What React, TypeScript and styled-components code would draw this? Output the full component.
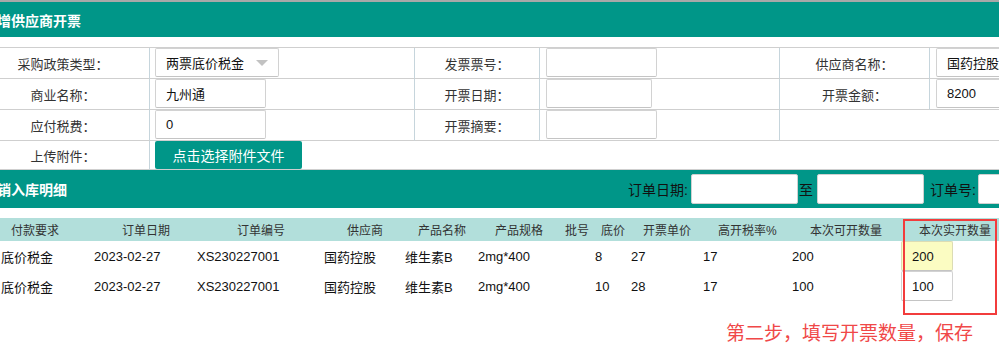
import React from "react";
import styled, { createGlobalStyle } from "styled-components";

const GlobalStyle = createGlobalStyle`
  html, body { margin: 0; padding: 0; background: #fff; }
  body {
    font-family: "Liberation Sans", "Noto Sans CJK SC", sans-serif;
    font-size: 13px;
    color: #333;
    overflow: hidden;
  }
  * { box-sizing: border-box; }
`;

const TEAL = "#009688";

const Page = styled.div`
  position: relative;
  width: 999px;
  height: 357px;
  overflow: hidden;
`;

const TopStrip = styled.div`
  height: 2px;
  background: #a8a8a8;
`;

const Band = styled.div<{ $h: number }>`
  height: ${(p) => p.$h}px;
  background: ${TEAL};
  display: flex;
  align-items: center;
  white-space: nowrap;
`;

const BandTitle = styled.div<{ $w?: number }>`
  flex: 0 0 ${(p) => (p.$w ? `${p.$w}px` : "auto")};
  margin-left: -3px;
  color: #fff;
  font-weight: bold;
  font-size: 14px;
  font-family: "Noto Sans CJK SC", "Liberation Sans", sans-serif;
`;

const Gap = styled.div<{ $h: number }>`
  height: ${(p) => p.$h}px;
`;

const FormGrid = styled.div`
  display: grid;
  grid-template-columns: 150px 265px 125px 240px 150px 1fr;
  border-top: 1px solid #cfcfcf;
`;

const Cell = styled.div<{ $span?: number; $h?: number; $last?: boolean }>`
  grid-column: span ${(p) => p.$span ?? 1};
  height: ${(p) => p.$h ?? 31}px;
  border-bottom: 1px solid #cfcfcf;
  border-right: ${(p) => (p.$last ? "none" : "1px solid #c6d5dc")};
  display: flex;
  align-items: center;
  white-space: nowrap;
  overflow: hidden;
`;

const LabelCell = styled(Cell)<{ $pr?: number }>`
  justify-content: center;
  padding-right: ${(p) => p.$pr ?? 0}px;
  color: #333;
`;

const FieldCell = styled(Cell)<{ $pl?: number }>`
  padding-left: ${(p) => p.$pl ?? 5}px;
  align-items: flex-start;
`;

const TextBox = styled.div<{ $w: number; $h?: number; $bg?: string; $border?: string }>`
  flex: 0 0 ${(p) => p.$w}px;
  width: ${(p) => p.$w}px;
  height: ${(p) => p.$h ?? 29}px;
  background: ${(p) => p.$bg ?? "#fff"};
  border: 1px solid ${(p) => p.$border ?? "#d2d2d2"};
  border-bottom-color: #c4c4c4;
  border-radius: 2px;
  display: flex;
  align-items: center;
  justify-content: space-between;
  padding: 0 10px;
  color: #111;
  font-size: 13px;
  white-space: nowrap;
  overflow: hidden;
`;

const Caret = styled.span`
  width: 0;
  height: 0;
  border-left: 6px solid transparent;
  border-right: 6px solid transparent;
  border-top: 6px solid #c2c2c2;
`;

const UploadButton = styled.button`
  height: 28px;
  width: 147px;
  border: none;
  border-radius: 2px;
  background: ${TEAL};
  color: #fff;
  font-size: 14px;
  font-family: "Noto Sans CJK SC", "Liberation Sans", sans-serif;
  padding: 0;
`;

const Filter = styled.div`
  display: flex;
  align-items: center;
  color: #111;
  font-size: 14px;
`;

const FilterLabel = styled.span<{ $ml?: number; $mr?: number }>`
  margin-left: ${(p) => p.$ml ?? 0}px;
  margin-right: ${(p) => p.$mr ?? 0}px;
`;

const FilterInput = styled.div`
  width: 107px;
  height: 30px;
  background: #fff;
  border: 1px solid #d0d0d0;
  border-radius: 2px;
  flex: 0 0 107px;
`;

const HeadRow = styled.div`
  display: grid;
  grid-template-columns: 111px 115px 110px 71px 77px 70px 36px 42px 75px 92px 109px 1fr;
  padding-left: 11px;
  height: 23px;
  align-items: center;
  background: #b2dfdb;
  color: #333;
  font-size: 12px;
  white-space: nowrap;
`;

const BodyRow = styled.div`
  display: grid;
  grid-template-columns: 93px 103px 127px 81px 73px 117px 36px 72px 89px 109px 1fr;
  padding-left: 1px;
  height: 30px;
  align-items: center;
  color: #111;
  white-space: nowrap;
`;

const Note = styled.div`
  margin-top: 19px;
  padding-left: 726px;
  font-size: 19px;
  line-height: 24px;
  color: #f04848;
  font-family: "Noto Sans CJK SC", "Liberation Sans", sans-serif;
  white-space: nowrap;
`;

const Highlight = styled.div`
  position: absolute;
  left: 903px;
  top: 219px;
  width: 94px;
  height: 96px;
  border: 2px solid #f23c3c;
  pointer-events: none;
`;

const headers = [
  "付款要求",
  "订单日期",
  "订单编号",
  "供应商",
  "产品名称",
  "产品规格",
  "批号",
  "底价",
  "开票单价",
  "高开税率%",
  "本次可开数量",
  "本次实开数量",
];

const rows = [
  { pay: "底价税金", date: "2023-02-27", no: "XS230227001", sup: "国药控股", name: "维生素B", spec: "2mg*400", base: "8", price: "27", rate: "17", avail: "200", qty: "200", hl: true },
  { pay: "底价税金", date: "2023-02-27", no: "XS230227001", sup: "国药控股", name: "维生素B", spec: "2mg*400", base: "10", price: "28", rate: "17", avail: "100", qty: "100", hl: false },
];

export default function App() {
  return (
    <Page>
      <GlobalStyle />
      <TopStrip />
      <Band $h={35}>
        <BandTitle>增供应商开票</BandTitle>
      </Band>
      <Gap $h={10} />
      <FormGrid>
        <LabelCell $pr={23}>采购政策类型：</LabelCell>
        <FieldCell>
          <TextBox $w={124}>
            两票底价税金
            <Caret />
          </TextBox>
        </FieldCell>
        <LabelCell>发票票号：</LabelCell>
        <FieldCell $pl={6}>
          <TextBox $w={111} />
        </FieldCell>
        <LabelCell>供应商名称：</LabelCell>
        <FieldCell $pl={6} $last>
          <TextBox $w={120}>国药控股</TextBox>
        </FieldCell>

        <LabelCell $pr={23}>商业名称：</LabelCell>
        <FieldCell>
          <TextBox $w={111}>九州通</TextBox>
        </FieldCell>
        <LabelCell>开票日期：</LabelCell>
        <FieldCell $pl={6}>
          <TextBox $w={106} />
        </FieldCell>
        <LabelCell>开票金额：</LabelCell>
        <FieldCell $pl={6} $last>
          <TextBox $w={120}>8200</TextBox>
        </FieldCell>

        <LabelCell $pr={23}>应付税费：</LabelCell>
        <FieldCell>
          <TextBox $w={111}>0</TextBox>
        </FieldCell>
        <LabelCell>开票摘要：</LabelCell>
        <FieldCell $pl={6}>
          <TextBox $w={111} />
        </FieldCell>
        <Cell $span={2} $last />

        <LabelCell $pr={23} $h={29}>上传附件：</LabelCell>
        <FieldCell $span={5} $h={29} $last>
          <UploadButton>点击选择附件文件</UploadButton>
        </FieldCell>
      </FormGrid>
      <Band $h={38}>
        <BandTitle $w={631}>销入库明细</BandTitle>
        <Filter>
          <FilterLabel $mr={3}>订单日期:</FilterLabel>
          <FilterInput />
          <FilterLabel $ml={1} $mr={4}>至</FilterLabel>
          <FilterInput />
          <FilterLabel $ml={6} $mr={2}>订单号:</FilterLabel>
          <FilterInput />
        </Filter>
      </Band>
      <Gap $h={10} />
      <HeadRow>
        {headers.map((h) => (
          <span key={h}>{h}</span>
        ))}
      </HeadRow>
      {rows.map((r, i) => (
        <BodyRow key={i}>
          <span>{r.pay}</span>
          <span>{r.date}</span>
          <span>{r.no}</span>
          <span>{r.sup}</span>
          <span>{r.name}</span>
          <span>{r.spec}</span>
          <span>{r.base}</span>
          <span>{r.price}</span>
          <span>{r.rate}</span>
          <span>{r.avail}</span>
          <span>
            <TextBox $w={52} $h={30} $bg={r.hl ? "#fbfcc2" : "#fff"} $border={r.hl ? "#dcdcb4" : "#d2d2d2"}>
              {r.qty}
            </TextBox>
          </span>
        </BodyRow>
      ))}
      <Note>第二步，填写开票数量，保存</Note>
      <Highlight />
    </Page>
  );
}
